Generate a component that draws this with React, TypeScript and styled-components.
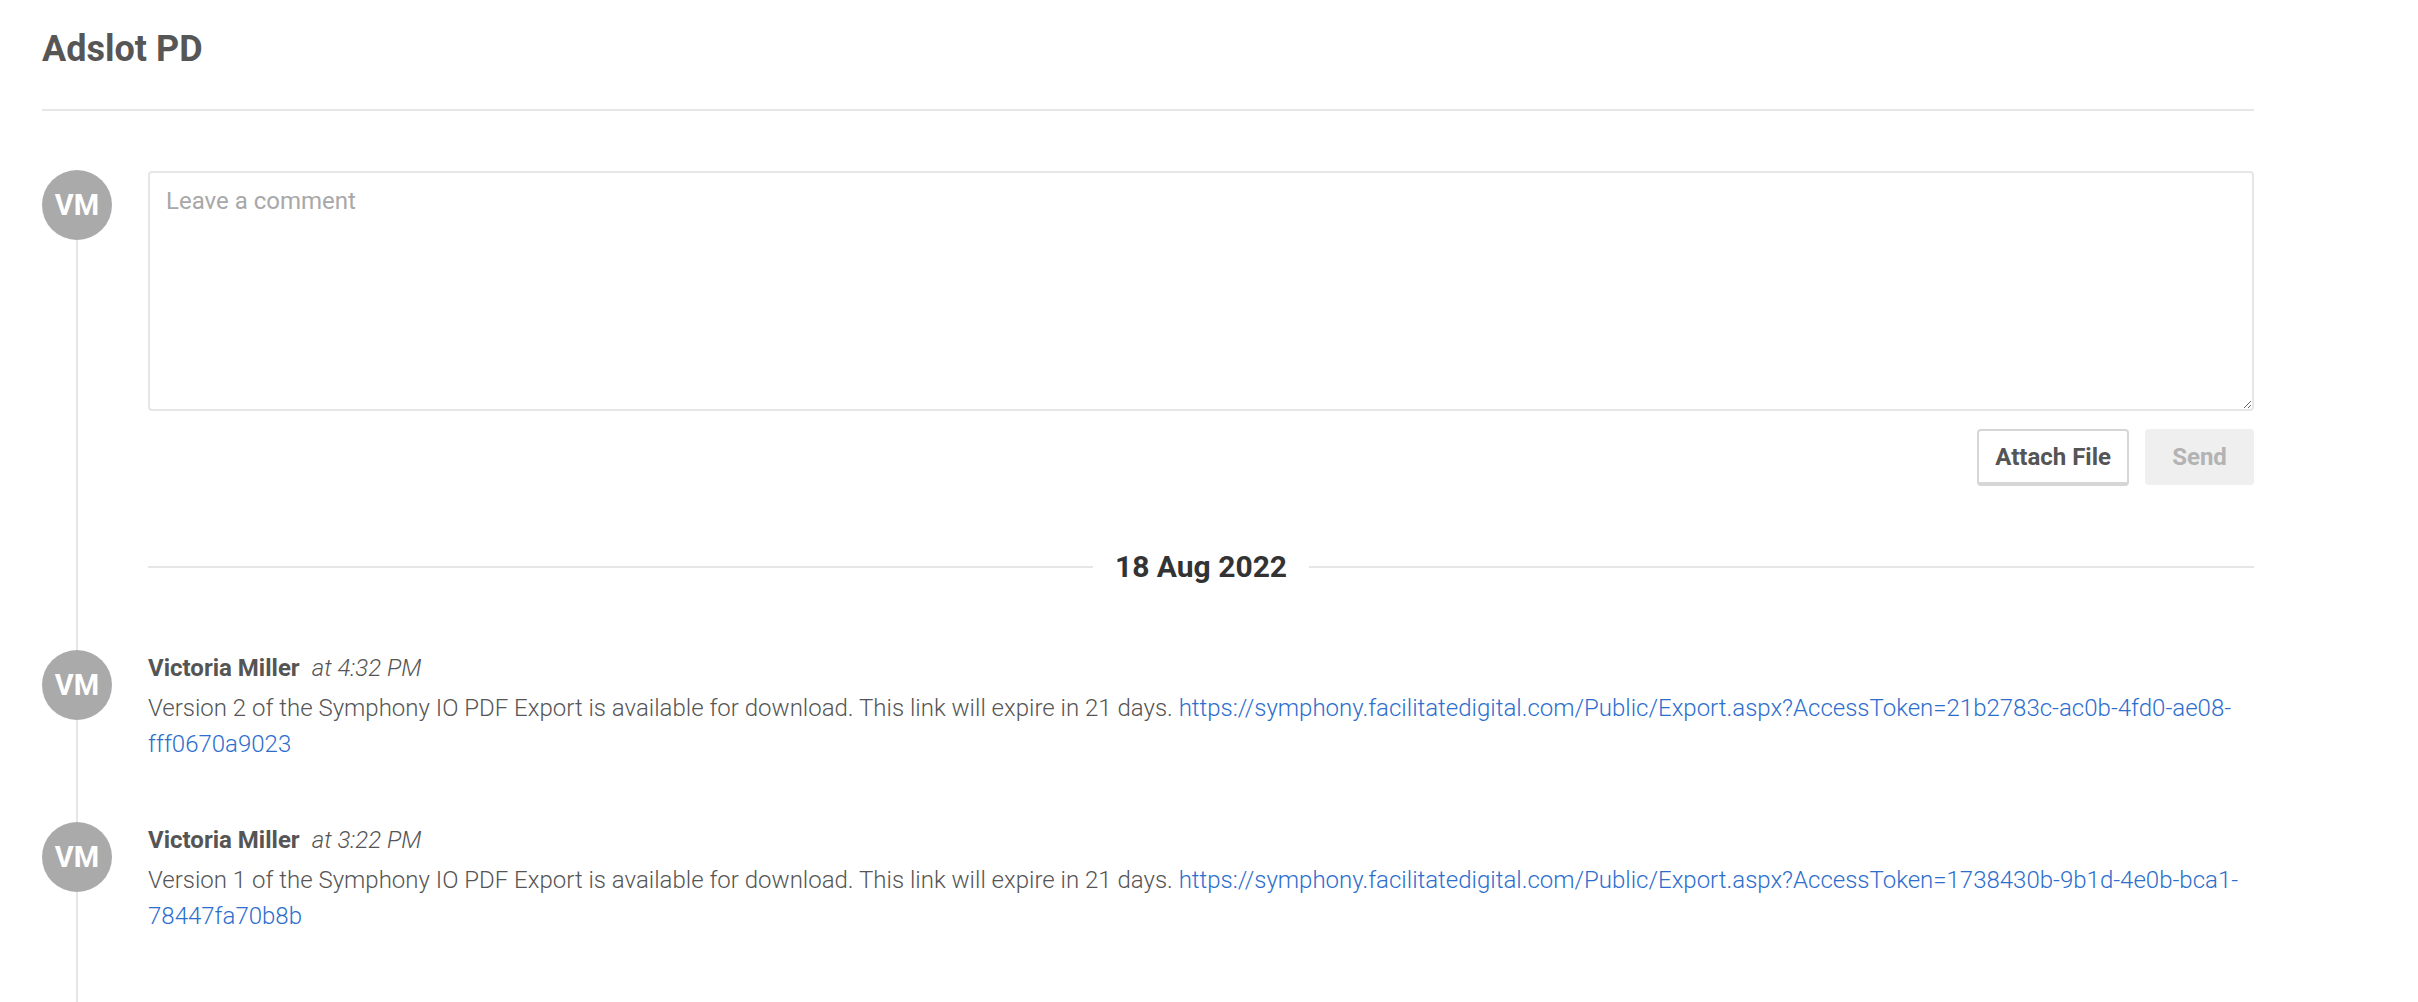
import styled, { createGlobalStyle } from 'styled-components';

type Comment = {
  id: number;
  author: string;
  initials: string;
  time: string;
  version: number;
  url: string;
};

const comments: Comment[] = [
  {
    id: 2,
    author: 'Victoria Miller',
    initials: 'VM',
    time: 'at 4:32 PM',
    version: 2,
    url: 'https://symphony.facilitatedigital.com/Public/Export.aspx?AccessToken=21b2783c-ac0b-4fd0-ae08-fff0670a9023',
  },
  {
    id: 1,
    author: 'Victoria Miller',
    initials: 'VM',
    time: 'at 3:22 PM',
    version: 1,
    url: 'https://symphony.facilitatedigital.com/Public/Export.aspx?AccessToken=1738430b-9b1d-4e0b-bca1-78447fa70b8b',
  },
];

const GlobalStyle = createGlobalStyle`
  html, body {
    margin: 0;
    padding: 0;
    background: #fff;
  }
  body {
    font-family: Roboto, 'Liberation Sans', Arial, sans-serif;
    color: #555;
  }
  * {
    box-sizing: border-box;
  }
`;

const Page = styled.div`
  display: flex;
  flex-direction: column;
  min-height: 100vh;
  width: 2254px;
  padding-left: 42px;
`;

const Header = styled.header`
  padding: 28px 0 38px;
  border-bottom: 2px solid #e6e6e6;
`;

const Title = styled.h1`
  margin: 0;
  font-size: 36px;
  line-height: 43px;
  font-weight: 700;
  color: #565656;
`;

const Timeline = styled.section`
  position: relative;
  flex: 1;
  margin-top: 59px;
  padding-bottom: 20px;

  &::before {
    content: '';
    position: absolute;
    left: 34px;
    top: 0;
    bottom: 0;
    width: 2px;
    background: #e6e6e6;
  }
`;

const Row = styled.div`
  position: relative;
  display: grid;
  grid-template-columns: 70px 1fr;
  column-gap: 36px;

  & + & {
    margin-top: 60px;
  }
`;

const Avatar = styled.div`
  width: 70px;
  height: 70px;
  border-radius: 50%;
  background: #aaaaaa;
  color: #fff;
  font-size: 29px;
  font-weight: 700;
  display: flex;
  align-items: center;
  justify-content: center;
  z-index: 1;
`;

const Form = styled.div`
  display: flex;
  flex-direction: column;
  padding-top: 1px;
`;

const TextArea = styled.textarea`
  width: 100%;
  height: 240px;
  border: 2px solid #e6e6e6;
  border-radius: 4px;
  padding: 10px 16px;
  font-family: Roboto, 'Liberation Sans', Arial, sans-serif;
  font-size: 24px;
  line-height: 36px;
  font-weight: 400;
  color: #555;
  resize: vertical;
  outline: none;

  &::placeholder {
    color: #a8a8a8;
  }
`;

const Actions = styled.div`
  display: flex;
  justify-content: flex-end;
  gap: 16px;
  margin-top: 18px;
`;

const Button = styled.button<{ $variant: 'outline' | 'disabled' }>`
  height: 57px;
  padding: 0 16px;
  border-radius: 4px;
  white-space: nowrap;
  font-family: Roboto, 'Liberation Sans', Arial, sans-serif;
  font-size: 24px;
  font-weight: 700;
  cursor: pointer;
  ${({ $variant }) =>
    $variant === 'outline'
      ? `
    background: #fff;
    color: #555;
    border: 2px solid #d6d6d6;
    border-bottom-width: 4px;
  `
      : `
    min-width: 109px;
    height: 56px;
    background: #efefef;
    color: #b3b3b3;
    border: none;
    cursor: default;
  `}
`;

const DateDivider = styled.div`
  display: flex;
  align-items: center;
  gap: 22px;
  margin: 63px 0 65px 106px;

  &::before,
  &::after {
    content: '';
    flex: 1;
    height: 2px;
    background: #e6e6e6;
  }
`;

const DateLabel = styled.span`
  font-size: 30px;
  line-height: 36px;
  font-weight: 700;
  color: #333;
`;

const Body = styled.div`
  min-width: 0;
`;

const Meta = styled.div`
  display: flex;
  align-items: baseline;
  gap: 12px;
  line-height: 36px;
  margin-bottom: 4px;
`;

const Author = styled.span`
  font-size: 24px;
  font-weight: 700;
  color: #555;
`;

const Time = styled.span`
  font-size: 24px;
  font-style: italic;
  font-weight: 300;
  color: #555;
`;

const Text = styled.p`
  margin: 0;
  font-size: 24px;
  line-height: 36px;
  font-weight: 300;
  color: #555;
`;

const Link = styled.a`
  color: #2d6ecd;
  text-decoration: none;
`;

const withBreaks = (url: string) =>
  url.split('-').map((part, i, arr) => (
    <span key={i}>
      {part}
      {i < arr.length - 1 && (
        <>
          -<wbr />
        </>
      )}
    </span>
  ));

export default function App() {
  return (
    <>
      <GlobalStyle />
      <Page>
        <Header>
          <Title>Adslot PD</Title>
        </Header>

        <Timeline>
          <Row>
            <Avatar>VM</Avatar>
            <Form>
              <TextArea placeholder='Leave a comment' />
              <Actions>
                <Button $variant='outline'>Attach File</Button>
                <Button $variant='disabled'>Send</Button>
              </Actions>
            </Form>
          </Row>

          <DateDivider>
            <DateLabel>18 Aug 2022</DateLabel>
          </DateDivider>

          {comments.map((c) => (
            <Row key={c.id}>
              <Avatar>{c.initials}</Avatar>
              <Body>
                <Meta>
                  <Author>{c.author}</Author>
                  <Time>{c.time}</Time>
                </Meta>
                <Text>
                  Version {c.version} of the Symphony IO PDF Export is available for download. This link will
                  expire in 21 days. <Link href='#'>{withBreaks(c.url)}</Link>
                </Text>
              </Body>
            </Row>
          ))}
        </Timeline>
      </Page>
    </>
  );
}
